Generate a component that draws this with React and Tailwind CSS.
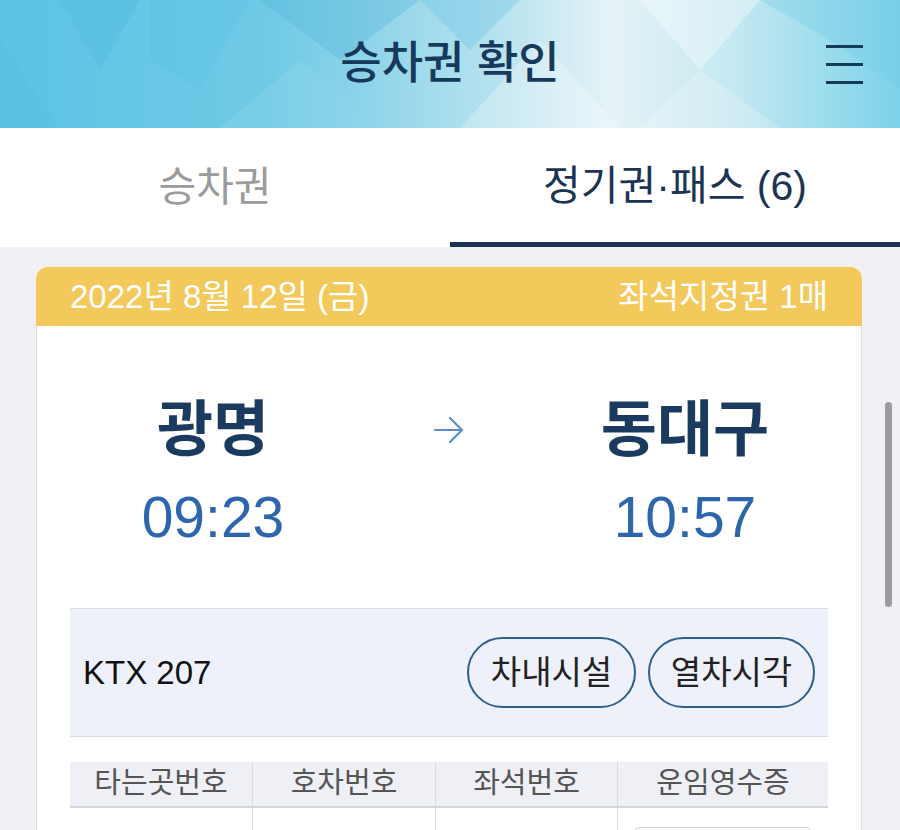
import React from "react";

const Arrow = () => (
  <svg width="32" height="28" viewBox="0 0 32 28" fill="none" stroke="#5a8fc8" strokeWidth="2.2" strokeLinecap="round" strokeLinejoin="round">
    <path d="M2 14h27" />
    <path d="M17 2l12 12-12 12" />
  </svg>
);

const HeaderPattern = () => (
  <svg className="absolute inset-0 h-full w-full" viewBox="0 0 900 128" preserveAspectRatio="none">
    <polygon points="60,0 140,0 100,70" fill="#4fb6dc" opacity="0.35" />
    <polygon points="150,0 250,0 200,90 150,60" fill="#5cc0e2" opacity="0.35" />
    <polygon points="260,0 420,0 340,60" fill="#4aaed8" opacity="0.3" />
    <polygon points="300,60 380,128 220,128" fill="#8fd6ec" opacity="0.35" />
    <polygon points="420,0 520,0 470,50" fill="#5cbde0" opacity="0.3" />
    <polygon points="540,40 620,128 460,128" fill="#ffffff" opacity="0.25" />
    <polygon points="640,0 760,0 700,70" fill="#ffffff" opacity="0.35" />
    <polygon points="760,0 900,0 900,90 830,40" fill="#6fcbe5" opacity="0.3" />
    <polygon points="700,70 780,128 640,128" fill="#ffffff" opacity="0.2" />
    <polygon points="0,40 60,128 0,128" fill="#55bde0" opacity="0.3" />
  </svg>
);

export default function App() {
  return (
    <div className="relative h-[830px] w-[900px] overflow-hidden bg-[#f0f0f5] font-['Liberation_Sans','Noto_Sans_CJK_KR',sans-serif]">
      {/* header */}
      <header className="relative h-[128px] overflow-hidden bg-[linear-gradient(90deg,#5cc3e4_0%,#70cae6_30%,#b6e2ef_55%,#e5f3f7_68%,#c3e8f1_82%,#7bd2e9_100%)]">
        <HeaderPattern />
        <div className="relative grid h-full grid-cols-[1fr_auto_1fr] items-center">
          <div />
          <h1 className="text-[45px] font-medium text-[#173a5c]">승차권 확인</h1>
          <div className="mr-[37px] flex flex-col gap-[15px] justify-self-end">
            <span className="block h-[3px] w-[37px] bg-[#163a5a]" />
            <span className="block h-[3px] w-[37px] bg-[#163a5a]" />
            <span className="block h-[3px] w-[37px] bg-[#163a5a]" />
          </div>
        </div>
      </header>

      {/* tabs */}
      <div className="grid h-[119px] grid-cols-2 bg-white">
        <button className="flex items-center justify-center text-[41px] text-[#9b9b9b]">
          <span className="mr-[20px]">승차권</span>
        </button>
        <button className="flex items-center justify-center border-b-[5px] border-[#1b3453] pt-[4px] text-[41px] text-[#1b3453]">
          정기권·패스 (6)
        </button>
      </div>

      {/* ticket card */}
      <div className="ml-[36px] mt-[20px] w-[826px]">
        <div className="flex h-[59px] items-center justify-between rounded-t-[12px] bg-[#f3c95b] px-[34px] text-[33px] text-white">
          <span>2022년 8월 12일 (금)</span>
          <span>좌석지정권 1매</span>
        </div>

        <div className="border-x border-[#dcdce3] bg-white px-[33px] pb-[40px]">
          <div className="grid grid-cols-[286px_1fr_286px] pt-[72px]">
            <div className="flex flex-col items-center">
              <div className="h-[64px] text-[61px] font-semibold leading-[64px] text-[#1b3a5f]">광명</div>
              <div className="mt-[27px] h-[56px] text-[57px] leading-[56px] text-[#2d66ad]">09:23</div>
            </div>
            <div className="flex h-[64px] items-center justify-center">
              <Arrow />
            </div>
            <div className="flex flex-col items-center">
              <div className="h-[64px] text-[61px] font-semibold leading-[64px] text-[#1b3a5f]">동대구</div>
              <div className="mt-[27px] h-[56px] text-[57px] leading-[56px] text-[#2d66ad]">10:57</div>
            </div>
          </div>

          {/* train info */}
          <div className="mt-[63px] flex h-[129px] items-center justify-between border-y border-[#d9dce4] bg-[#eef1f9] px-[13px]">
            <span className="text-[33px] text-[#111]">KTX 207</span>
            <div className="flex gap-[12px]">
              <button className="flex h-[71px] w-[169px] items-center justify-center rounded-full border-2 border-[#2c5f8f] text-[33px] text-[#222]">
                차내시설
              </button>
              <button className="flex h-[71px] w-[167px] items-center justify-center rounded-full border-2 border-[#2c5f8f] text-[33px] text-[#222]">
                열차시각
              </button>
            </div>
          </div>

          {/* seat table */}
          <div className="mt-[25px]">
            <div className="grid h-[46px] grid-cols-[182px_183px_182px_211px] border-b-2 border-[#d3d5dc] bg-[#eef0f5] text-[29px] text-[#555]">
              <div className="flex items-center justify-center">타는곳번호</div>
              <div className="flex items-center justify-center border-l border-[#d9dbe1]">호차번호</div>
              <div className="flex items-center justify-center border-l border-[#d9dbe1]">좌석번호</div>
              <div className="flex items-center justify-center border-l border-[#d9dbe1]">운임영수증</div>
            </div>
            <div className="grid h-[80px] grid-cols-[182px_183px_182px_211px]">
              <div />
              <div className="border-l border-[#d9dbe1]" />
              <div className="border-l border-[#d9dbe1]" />
              <div className="border-l border-[#d9dbe1] px-[16px] pt-[19px]">
                <div className="h-[50px] rounded-[6px] border border-[#cfd1d6]" />
              </div>
            </div>
          </div>
        </div>
      </div>

      {/* scrollbar */}
      <div className="absolute right-[8px] top-[402px] h-[205px] w-[7px] rounded-full bg-[#9b9ba0]" />
    </div>
  );
}
